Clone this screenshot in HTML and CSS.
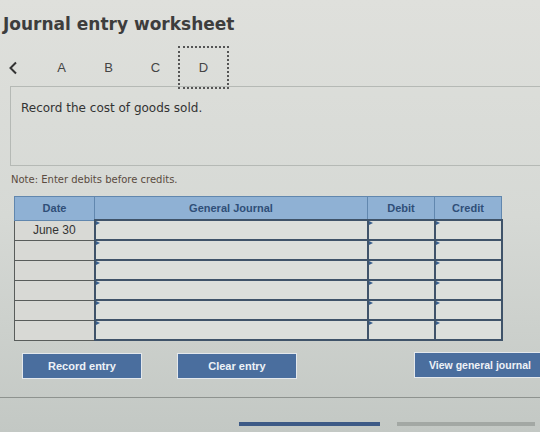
FILE: index.html
```html
<!DOCTYPE html>
<html lang="en">
<head>
    <meta charset="UTF-8">
    <meta name="viewport" content="width=device-width, initial-scale=1.0">
    <title>Journal entry worksheet</title>
    <link rel="stylesheet" href="styles.css">
</head>
<body>
    <h1 class="title">Journal entry worksheet</h1>

    <nav class="tabs">
        <span class="tab-back">
            <svg width="10" height="14" viewBox="0 0 10 14">
                <polyline points="8,1.5 2.5,7 8,12.5" fill="none" stroke="#333" stroke-width="2"/>
            </svg>
        </span>
        <span class="tab">A</span>
        <span class="tab">B</span>
        <span class="tab">C</span>
        <span class="tab active">D</span>
    </nav>

    <div class="task">Record the cost of goods sold.</div>

    <p class="note">Note: Enter debits before credits.</p>

    <table class="journal">
        <thead>
            <tr>
                <th class="col-date">Date</th>
                <th class="col-account">General Journal</th>
                <th class="col-amount">Debit</th>
                <th class="col-amount">Credit</th>
            </tr>
        </thead>
        <tbody>
            <tr>
                <td class="date">June 30</td>
                <td class="entry"></td>
                <td class="entry"></td>
                <td class="entry"></td>
            </tr>
            <tr>
                <td class="date"></td>
                <td class="entry"></td>
                <td class="entry"></td>
                <td class="entry"></td>
            </tr>
            <tr>
                <td class="date"></td>
                <td class="entry"></td>
                <td class="entry"></td>
                <td class="entry"></td>
            </tr>
            <tr>
                <td class="date"></td>
                <td class="entry"></td>
                <td class="entry"></td>
                <td class="entry"></td>
            </tr>
            <tr>
                <td class="date"></td>
                <td class="entry"></td>
                <td class="entry"></td>
                <td class="entry"></td>
            </tr>
            <tr>
                <td class="date"></td>
                <td class="entry"></td>
                <td class="entry"></td>
                <td class="entry"></td>
            </tr>
        </tbody>
    </table>

    <div class="actions">
        <button class="btn btn-record">Record entry</button>
        <button class="btn btn-clear">Clear entry</button>
        <button class="btn btn-view">View general journal</button>
    </div>

    <hr class="divider">

    <div class="progress">
        <span class="bar bar-on"></span>
        <span class="bar bar-off"></span>
    </div>
</body>
</html>
```

FILE: styles.css
```css
body, html {
    margin: 0;
    padding: 0;
    height: 100%;
    overflow: hidden;
}

body {
    background: linear-gradient(to bottom, #dfe0dc 0%, #d6d9d5 50%, #c3c8c4 100%);
    font-family: "DejaVu Sans", Verdana, sans-serif;
    color: #333;
}

.title {
    margin: 0;
    padding: 13px 0 0 3px;
    font-size: 17px;
    line-height: 22px;
    font-weight: bold;
    color: #3d3d3d;
}

.tabs {
    display: flex;
    height: 40px;
    margin-top: 11px;
    font-family: "Liberation Sans", Arial, sans-serif;
    font-size: 13px;
    color: #444;
}

.tab-back {
    width: 38px;
    display: flex;
    justify-content: center;
    align-items: center;
    height: 43px;
    margin-left: -6px;
    margin-right: 6px;
}

.tab-back svg {
    display: block;
}

.tab {
    width: 47px;
    height: 43px;
    display: flex;
    justify-content: center;
    align-items: center;
    box-sizing: border-box;
}

.tab.active {
    width: 51px;
    margin-left: -1px;
    border: 2px dotted #555;
    position: relative;
    z-index: 1;
}

.task {
    margin-left: 10px;
    height: 80px;
    box-sizing: border-box;
    border: 1px solid #b5b9b5;
    border-right: none;
    padding: 13px 10px;
    font-size: 12px;
    line-height: 16px;
    color: #333;
}

.note {
    margin: 7px 0 0 11px;
    font-size: 10px;
    line-height: 14px;
    color: #5a4b40;
}

.journal {
    margin: 9px 0 0 14px;
    border-collapse: collapse;
    font-family: "Liberation Sans", Arial, sans-serif;
}

.journal th {
    height: 22px;
    padding: 0;
    background-color: #8fb1d4;
    border: 1px solid #6187ae;
    color: #2f4f78;
    font-size: 11px;
    font-weight: bold;
}

.col-date {
    width: 79px;
}

.col-account {
    width: 272px;
}

.col-amount {
    width: 66px;
}

.journal td {
    height: 20px;
    padding: 0;
    box-sizing: border-box;
}

.date {
    background-color: #d8d9d5;
    border: 1px solid #595d5b;
    text-align: center;
    font-size: 12px;
    color: #333;
}

.entry {
    position: relative;
    background-color: #dcdfdb;
    border: 2px solid #3f5369;
}

/* little flag marking an entry field */
.entry::before {
    content: "";
    position: absolute;
    left: 0;
    top: 0;
    border-left: 4px solid #3a5f8c;
    border-top: 2px solid transparent;
    border-bottom: 2px solid transparent;
}

.actions {
    display: flex;
    margin: 12px 0 0 22px;
}

.btn {
    flex-shrink: 0;
    height: 26px;
    width: 120px;
    padding: 0;
    border: 1px solid #e4e8ec;
    background-color: #4a6e9e;
    color: #eef2f7;
    font-family: "Liberation Sans", Arial, sans-serif;
    font-size: 11px;
    font-weight: bold;
    cursor: pointer;
}

.btn-clear {
    margin-left: 35px;
}

.btn-view {
    margin-left: 117px;
    margin-top: -1px;
    width: 132px;
    font-size: 10.5px;
}

.divider {
    margin: 18px 0 0 0;
    border: none;
    border-top: 1px solid #8e938f;
}

.progress {
    display: flex;
    margin: 24px 0 0 239px;
}

.bar {
    height: 4px;
}

.bar-on {
    width: 141px;
    background-color: #3d5a86;
}

.bar-off {
    width: 138px;
    margin-left: 17px;
    background-color: #a3a8a4;
}
```
